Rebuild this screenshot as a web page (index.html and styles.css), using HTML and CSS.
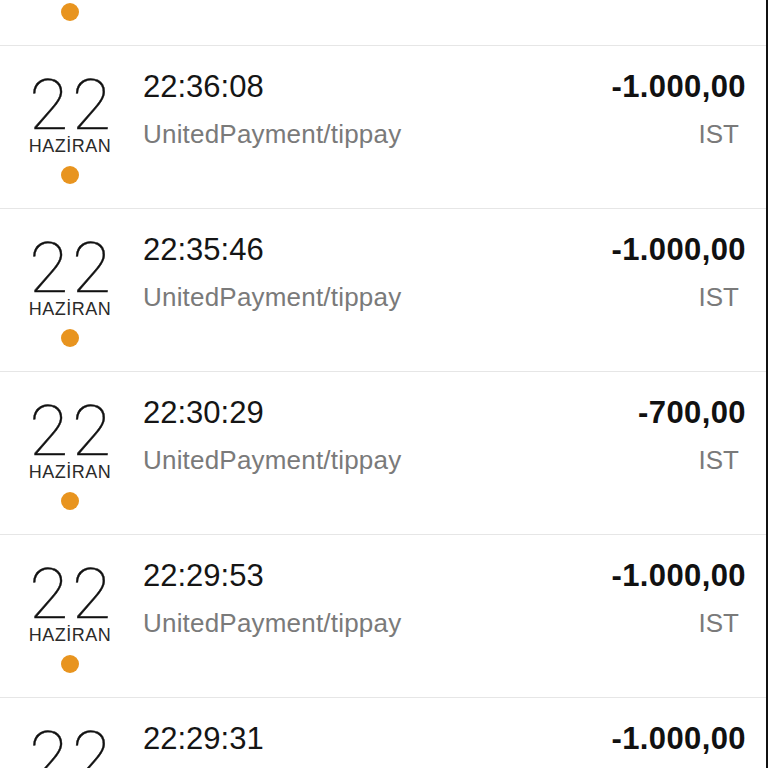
FILE: index.html
```html
<!DOCTYPE html>
<html lang="tr">
<head>
  <meta charset="UTF-8">
  <meta name="viewport" content="width=device-width, initial-scale=1.0">
  <title>Hesap Hareketleri</title>
  <link rel="stylesheet" href="styles.css">
</head>
<body>
  <div class="screen">
    <ul class="tx-list">
      <li class="tx">
        <div class="tx-date">
          <div class="day">22</div>
          <div class="month">HAZİRAN</div>
          <span class="dot"></span>
        </div>
        <div class="tx-info">
          <div class="time">22:36:55</div>
          <div class="desc">UnitedPayment/tippay</div>
        </div>
        <div class="tx-amount">
          <div class="amount">-1.000,00</div>
          <div class="city">IST</div>
        </div>
      </li>
      <li class="tx">
        <div class="tx-date">
          <div class="day">22</div>
          <div class="month">HAZİRAN</div>
          <span class="dot"></span>
        </div>
        <div class="tx-info">
          <div class="time">22:36:08</div>
          <div class="desc">UnitedPayment/tippay</div>
        </div>
        <div class="tx-amount">
          <div class="amount">-1.000,00</div>
          <div class="city">IST</div>
        </div>
      </li>
      <li class="tx">
        <div class="tx-date">
          <div class="day">22</div>
          <div class="month">HAZİRAN</div>
          <span class="dot"></span>
        </div>
        <div class="tx-info">
          <div class="time">22:35:46</div>
          <div class="desc">UnitedPayment/tippay</div>
        </div>
        <div class="tx-amount">
          <div class="amount">-1.000,00</div>
          <div class="city">IST</div>
        </div>
      </li>
      <li class="tx">
        <div class="tx-date">
          <div class="day">22</div>
          <div class="month">HAZİRAN</div>
          <span class="dot"></span>
        </div>
        <div class="tx-info">
          <div class="time">22:30:29</div>
          <div class="desc">UnitedPayment/tippay</div>
        </div>
        <div class="tx-amount">
          <div class="amount">-700,00</div>
          <div class="city">IST</div>
        </div>
      </li>
      <li class="tx">
        <div class="tx-date">
          <div class="day">22</div>
          <div class="month">HAZİRAN</div>
          <span class="dot"></span>
        </div>
        <div class="tx-info">
          <div class="time">22:29:53</div>
          <div class="desc">UnitedPayment/tippay</div>
        </div>
        <div class="tx-amount">
          <div class="amount">-1.000,00</div>
          <div class="city">IST</div>
        </div>
      </li>
      <li class="tx">
        <div class="tx-date">
          <div class="day">22</div>
          <div class="month">HAZİRAN</div>
          <span class="dot"></span>
        </div>
        <div class="tx-info">
          <div class="time">22:29:31</div>
          <div class="desc">UnitedPayment/tippay</div>
        </div>
        <div class="tx-amount">
          <div class="amount">-1.000,00</div>
          <div class="city">IST</div>
        </div>
      </li>
    </ul>
  </div>
</body>
</html>
```

FILE: styles.css
```css
html, body {
  margin: 0;
  padding: 0;
  background: #fff;
}
body {
  font-family: 'Liberation Sans', Arial, sans-serif;
  color: #111;
  overflow: hidden;
}
.screen {
  width: 766px;
  height: 768px;
  border-right: 2px solid #111;
  overflow: hidden;
}
.tx-list {
  list-style: none;
  margin: -117px 0 0 0;
  padding: 0;
}
.tx {
  display: flex;
  height: 162px;
  border-bottom: 1px solid #e6e6e6;
}
.tx-date {
  width: 100px;
  margin-left: 20px;
  padding-top: 26px;
  display: flex;
  flex-direction: column;
  align-items: center;
}
.day {
  font-family: Roboto, 'Liberation Sans', sans-serif;
  font-weight: 100;
  font-size: 71px;
  line-height: 66px;
  letter-spacing: 4px;
  padding-left: 4px;
  color: #111;
  -webkit-text-stroke: 0.4px #111;
}
.month {
  font-size: 18px;
  line-height: 16px;
  letter-spacing: 0.5px;
  color: #2a2a2a;
}
.dot {
  width: 18px;
  height: 18px;
  margin-top: 12px;
  border-radius: 50%;
  background: #e8941f;
}
.tx-info {
  flex: 1;
  margin-left: 23px;
  padding-top: 23px;
}
.time {
  font-size: 31px;
  line-height: 36px;
  color: #151515;
}
.desc {
  font-size: 26px;
  line-height: 30px;
  margin-top: 14px;
  letter-spacing: 0.2px;
  color: #7a7a7a;
}
.tx-amount {
  padding-top: 23px;
  padding-right: 20px;
  text-align: right;
}
.amount {
  font-size: 31px;
  line-height: 36px;
  font-weight: bold;
  letter-spacing: 0.4px;
  color: #111;
}
.city {
  font-size: 26px;
  line-height: 30px;
  margin-top: 14px;
  margin-right: 7px;
  color: #7a7a7a;
}
```
